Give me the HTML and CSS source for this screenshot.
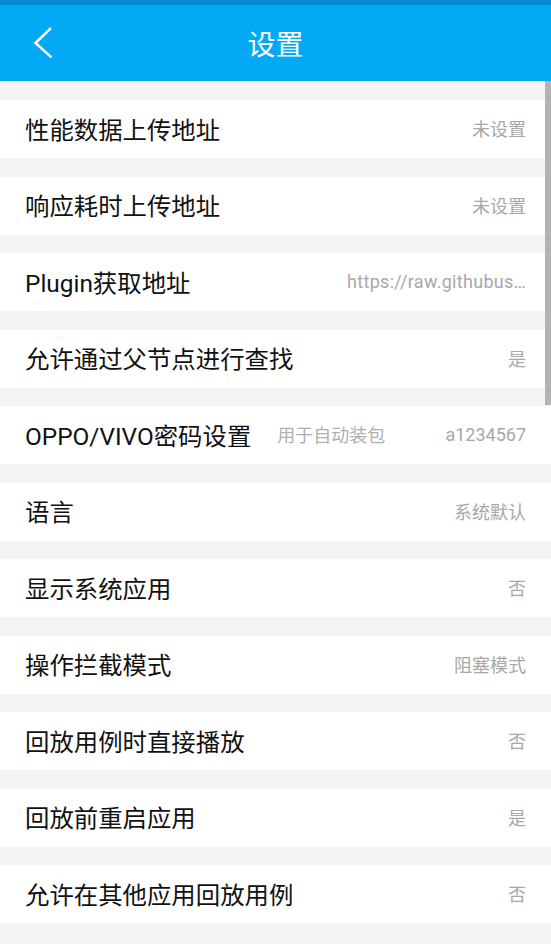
FILE: index.html
```html
<!DOCTYPE html>
<html lang="zh">
<head>
  <meta charset="UTF-8">
  <title>设置</title>
  <meta name="viewport" content="width=device-width, initial-scale=1.0">
  <link rel="stylesheet" href="styles.css">
</head>
<body>
  <div class="status-bar"></div>
  <div class="toolbar">
    <button class="back-btn" aria-label="返回">
      <svg width="26" height="40" viewBox="0 0 26 40">
        <path d="M22 9 L7.5 23 L22.5 36.5" fill="none" stroke="#fff" stroke-width="2.5" stroke-linecap="square"/>
      </svg>
    </button>
    <div class="toolbar-title">设置</div>
  </div>
  <div class="settings">
    <div class="setting-row">
      <span class="setting-label">性能数据上传地址</span>
      <span class="setting-value">未设置</span>
    </div>
    <div class="setting-row">
      <span class="setting-label">响应耗时上传地址</span>
      <span class="setting-value">未设置</span>
    </div>
    <div class="setting-row">
      <span class="setting-label">Plugin获取地址</span>
      <span class="setting-value url">https://raw.githubus…</span>
    </div>
    <div class="setting-row">
      <span class="setting-label">允许通过父节点进行查找</span>
      <span class="setting-value">是</span>
    </div>
    <div class="setting-row">
      <span class="setting-label">OPPO/VIVO密码设置</span>
      <span class="setting-hint">用于自动装包</span>
      <span class="setting-value">a1234567</span>
    </div>
    <div class="setting-row">
      <span class="setting-label">语言</span>
      <span class="setting-value">系统默认</span>
    </div>
    <div class="setting-row">
      <span class="setting-label">显示系统应用</span>
      <span class="setting-value">否</span>
    </div>
    <div class="setting-row">
      <span class="setting-label">操作拦截模式</span>
      <span class="setting-value">阻塞模式</span>
    </div>
    <div class="setting-row">
      <span class="setting-label">回放用例时直接播放</span>
      <span class="setting-value">否</span>
    </div>
    <div class="setting-row">
      <span class="setting-label">回放前重启应用</span>
      <span class="setting-value">是</span>
    </div>
    <div class="setting-row">
      <span class="setting-label">允许在其他应用回放用例</span>
      <span class="setting-value">否</span>
    </div>
  </div>
  <div class="scrollbar"></div>
</body>
</html>
```

FILE: styles.css
```css
body {
  margin: 0;
  padding: 0;
  background: #fff;
  font-family: Roboto, "Noto Sans CJK SC", sans-serif;
  overflow: hidden;
}
.status-bar {
  height: 5px;
  background: #0288d1;
}
.toolbar {
  height: 76px;
  background: #03a9f4;
  display: flex;
  align-items: center;
  justify-content: center;
  position: relative;
}
.back-btn {
  position: absolute;
  left: 28px;
  top: 15px;
  background: none;
  border: none;
  padding: 0;
  width: 26px;
  height: 40px;
}
.back-btn svg {
  display: block;
}
.toolbar-title {
  color: #fff;
  font-size: 28px;
}
.settings {
  background: #f4f4f4;
  padding: 19px 0 21px 0;
  display: flex;
  flex-direction: column;
  gap: 18.5px;
}
.setting-row {
  background: #fff;
  height: 58px;
  display: flex;
  align-items: center;
  padding: 0 25px 2px 25px;
  box-sizing: border-box;
}
.setting-label {
  font-size: 24.4px;
  color: #111;
  white-space: nowrap;
}
.setting-hint {
  font-size: 18px;
  color: #b0b0b0;
  margin-left: 26px;
  white-space: nowrap;
}
.setting-value {
  margin-left: auto;
  font-size: 18px;
  color: #a8a8a8;
  white-space: nowrap;
}
.setting-value.url {
  letter-spacing: 0.3px;
}
.scrollbar {
  position: absolute;
  right: 0;
  top: 81px;
  width: 6px;
  height: 324px;
  background: #b3b3b3;
}
```
